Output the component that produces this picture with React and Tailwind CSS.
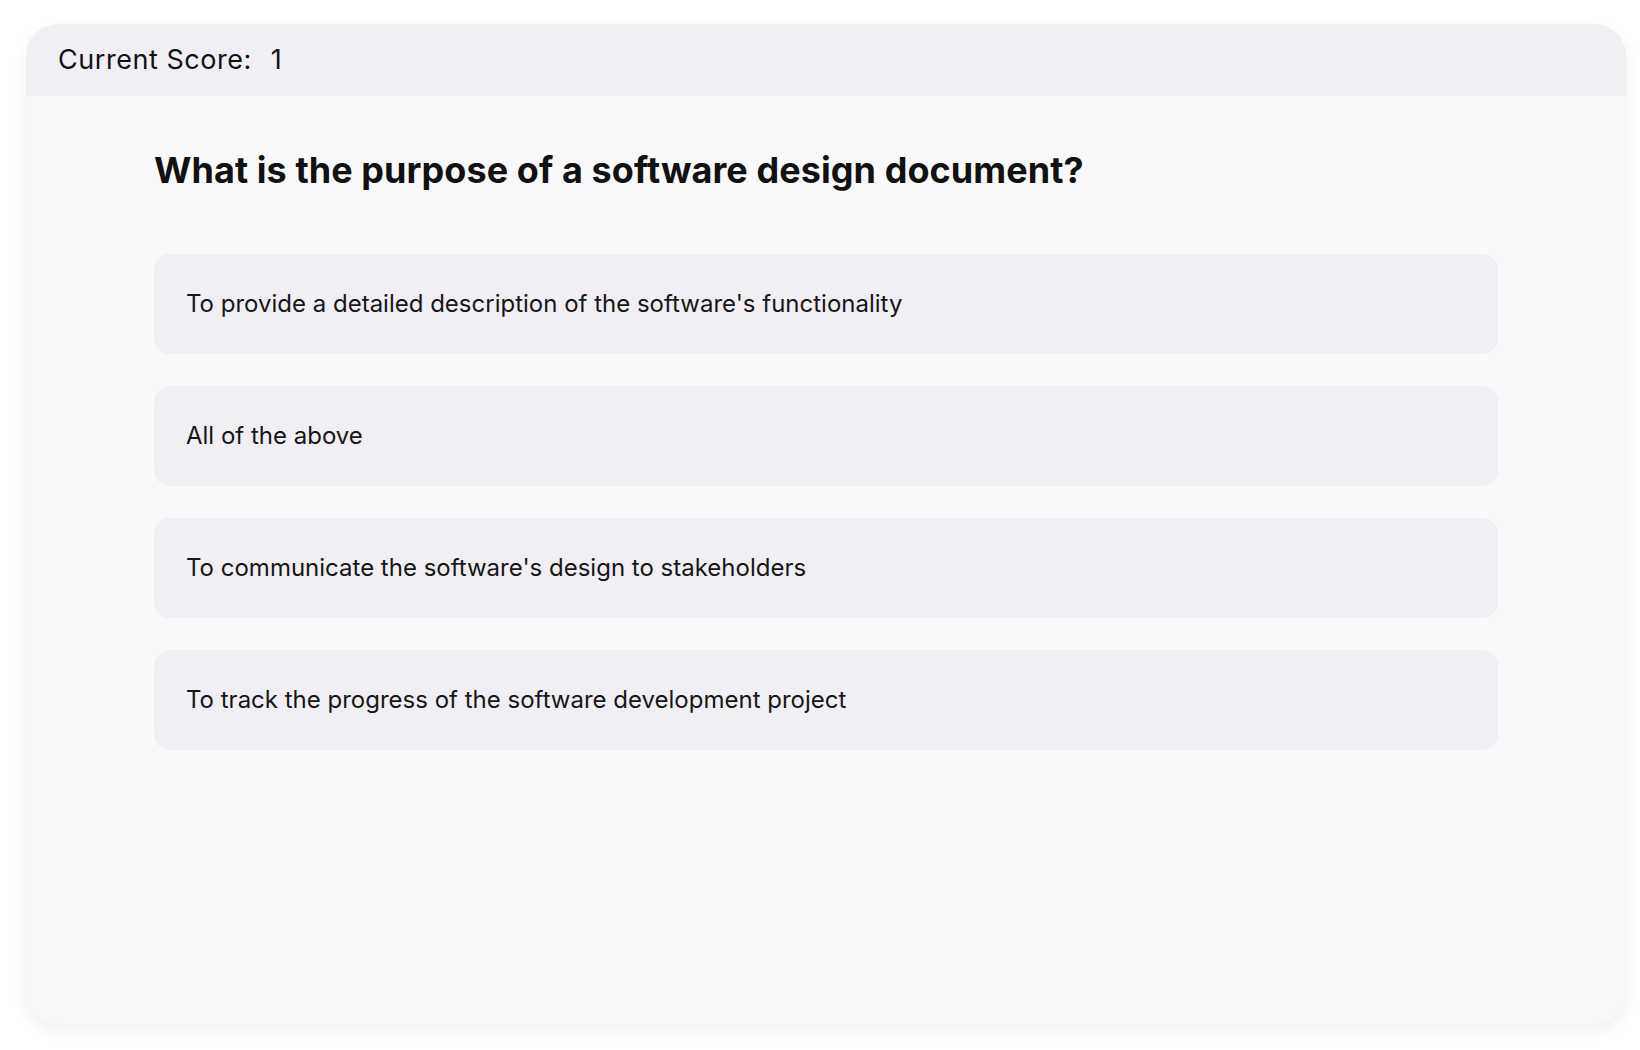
import { useState } from "react";

const options = [
  "To provide a detailed description of the software's functionality",
  "All of the above",
  "To communicate the software's design to stakeholders",
  "To track the progress of the software development project",
];

export default function App() {
  const [score] = useState(1);

  return (
    <div
      className="min-h-screen bg-white pt-6 pl-[26px]"
      style={{ fontFamily: "Inter, 'Noto Sans', sans-serif" }}
    >
      <div className="w-[1600px] h-[1000px] rounded-[32px] overflow-hidden bg-[#f9f9fb] shadow-[0_6px_16px_rgba(0,0,0,0.06)] flex flex-col">
        {/* score bar */}
        <div className="h-[72px] shrink-0 bg-[#f1eff5] px-8 flex items-center text-[27px] tracking-[0.02em] text-[#111111]">
          <span>Current Score:</span>
          <span className="ml-[19px]">{score}</span>
        </div>

        <div className="px-32 pt-[54px]">
          <h1 className="text-[36px] leading-10 font-bold text-[#111111] tracking-[0.002em]">
            What is the purpose of a software design document?
          </h1>

          <div className="mt-16 flex flex-col gap-8">
            {options.map((opt) => (
              <button
                key={opt}
                className="w-full h-[100px] rounded-2xl bg-[#f1eff5] px-8 text-left text-[24px] leading-9 text-[#161616]"
              >
                {opt}
              </button>
            ))}
          </div>
        </div>
      </div>
    </div>
  );
}
